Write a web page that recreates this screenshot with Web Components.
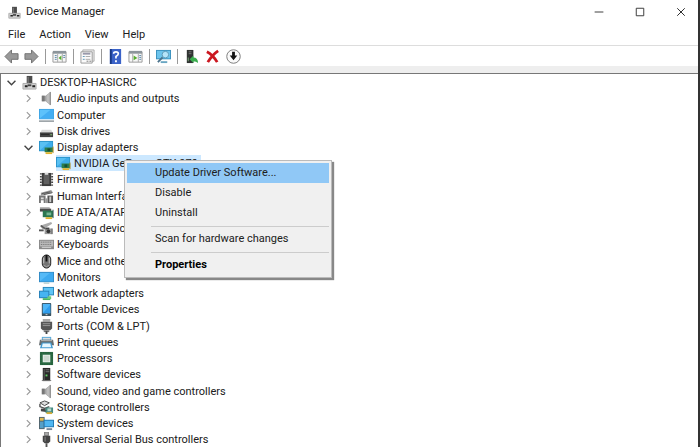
<!DOCTYPE html>
<html lang="en">
<head>
<meta charset="utf-8">
<title>Device Manager</title>
<style>
  html, body {
    margin: 0;
    height: 100%;
    overflow: hidden;
  }

  body {
    font-family: Roboto, "Open Sans", sans-serif;
    font-size: 11px;
    line-height: 16px;
    color: #202020;
    background: #fff;
  }
</style>
</head>
<body>
<dm-window heading="Device Manager">
  <dm-menubar slot="menu" items="File,Action,View,Help"></dm-menubar>
  <dm-toolbar slot="tools"></dm-toolbar>
  <dm-node icon="root" root open>DESKTOP-HASICRC
    <dm-node slot="nodes" icon="speaker">Audio inputs and outputs</dm-node>
    <dm-node slot="nodes" icon="computer">Computer</dm-node>
    <dm-node slot="nodes" icon="disk">Disk drives</dm-node>
    <dm-node slot="nodes" icon="display" open>Display adapters
      <dm-node slot="nodes" icon="display" leaf selected>NVIDIA GeForce GTX 970</dm-node>
    </dm-node>
    <dm-node slot="nodes" icon="firmware">Firmware</dm-node>
    <dm-node slot="nodes" icon="hid">Human Interface Devices</dm-node>
    <dm-node slot="nodes" icon="ide">IDE ATA/ATAPI controllers</dm-node>
    <dm-node slot="nodes" icon="imaging">Imaging devices</dm-node>
    <dm-node slot="nodes" icon="keyboard">Keyboards</dm-node>
    <dm-node slot="nodes" icon="mouse">Mice and other pointing devices</dm-node>
    <dm-node slot="nodes" icon="monitor">Monitors</dm-node>
    <dm-node slot="nodes" icon="network">Network adapters</dm-node>
    <dm-node slot="nodes" icon="portable">Portable Devices</dm-node>
    <dm-node slot="nodes" icon="port">Ports (COM &amp; LPT)</dm-node>
    <dm-node slot="nodes" icon="printer">Print queues</dm-node>
    <dm-node slot="nodes" icon="cpu">Processors</dm-node>
    <dm-node slot="nodes" icon="software">Software devices</dm-node>
    <dm-node slot="nodes" icon="speaker">Sound, video and game controllers</dm-node>
    <dm-node slot="nodes" icon="storage">Storage controllers</dm-node>
    <dm-node slot="nodes" icon="system">System devices</dm-node>
    <dm-node slot="nodes" icon="usb">Universal Serial Bus controllers</dm-node>
  </dm-node>
  <dm-context-menu slot="popup">
    <dm-item active>Update Driver Software...</dm-item>
    <dm-item>Disable</dm-item>
    <dm-item>Uninstall</dm-item>
    <dm-separator></dm-separator>
    <dm-item>Scan for hardware changes</dm-item>
    <dm-separator></dm-separator>
    <dm-item main>Properties</dm-item>
  </dm-context-menu>
</dm-window>

<script>
// All icons are drawn on a 16x16 grid
const ICONS = {
  root: `<path d="M5 1h6v9H5z" fill="#4b4b4b"/><path d="M6 2h1v7H6z" fill="#888"/><path d="M1 9h14v6H1z" fill="#d2d2d2" stroke="#aaa"/><path d="M3 11h3v2H3zM11 11h3v2h-3z" fill="#222"/><path d="M6 10h4v2H6z" fill="#444"/>`,
  speaker: `<path d="M3 5h4l5-4v14l-5-4H3z" fill="#a2a2a2"/><path d="M3 5h3v6H3z" fill="#777"/><path d="M8 5l4-4v14l-4-4z" fill="#bdbdbd"/><path d="M12 1v14" stroke="#777"/>`,
  computer: `<path d="M0 1h16v11H0z" fill="#3fa4e4"/><path d="M1 2h14v9H1z" fill="#5dc2fb"/><path d="M1 11L12 2h3v9z" fill="#43aef3"/><path d="M0 14h16" stroke="#8c9499" stroke-width="1.5"/>`,
  disk: `<path d="M3 6h10l2 4H1z" fill="#d9d9d9"/><path d="M1 9h14v5H1z" fill="#444"/><path d="M2 11h9" stroke="#222"/><path d="M12 11h2v1h-2z" fill="#83c774"/>`,
  display: `<path d="M0 1h15v11H0z" fill="#2a93ca"/><path d="M1 2h13v9H1z" fill="#59c0f2"/><path d="M1 11L11 2h3v9z" fill="#3fadea"/><path d="M6 8h9v5H6z" fill="#2d7d4b"/><path d="M9 9h3v3H9z" fill="#174f35"/><path d="M7 13h7v2H7z" fill="#e0b32f"/><path d="M15 7v7" stroke="#bb9226"/>`,
  firmware: `<path d="M3 1h10v14H3z" fill="#3c3c3c"/><path d="M5 3h6v10H5z" fill="#606060"/><path d="M1 2h2M1 5h2M1 8h2M1 11h2M1 14h2M13 2h2M13 5h2M13 8h2M13 11h2M13 14h2" stroke="#444" stroke-width="1.5"/><path d="M6 1h4v2H6z" fill="#ddd"/>`,
  hid: `<path d="M2 4l11-3 2 3-13 3z" fill="#999"/><path d="M3 5l9-2M5 6l9-2" stroke="#555"/><path d="M0 7h7v8H5v-3H2v3H0z" fill="#777"/><path d="M2 9h3v2H2z" fill="#ddd"/><path d="M9 7h6v8H9z" fill="#555"/><path d="M11 8h2v6h-2z" fill="#ccc"/><path d="M7 10h2v5H7z" fill="#999"/>`,
  ide: `<path d="M1 2h10l2 3H1z" fill="#b9b9b9"/><path d="M1 4h12v3H1z" fill="#4b4b4b"/><path d="M4 6h11v7H4z" fill="#2b7750"/><path d="M8 8h5v3H8z" fill="#76b693"/><path d="M7 13h7v2H7z" fill="#dbb130"/><path d="M15 5v9" stroke="#355"/>`,
  imaging: `<path d="M1 5l12-4 1 2-10 6z" fill="#aaa"/><path d="M2 5l7 5" stroke="#555" stroke-width="1.5"/><path d="M0 9h5v2H0z" fill="#555"/><path d="M6 8h8v6H6z" fill="#999"/><path d="M7 7h4v2H7z" fill="#444"/><circle cx="10" cy="11" r="2" fill="#333"/><path d="M14 8v6" stroke="#555"/>`,
  keyboard: `<path d="M0 3h16v10H0z" fill="#8a8a8a"/><path d="M1 4h14v6H1z" fill="#b9b9b9"/><path d="M2 5.500h12M2 8h12" stroke="#6a6a6a" stroke-dasharray="1 1"/><path d="M3 11h10" stroke="#ddd"/>`,
  mouse: `<rect x="3.500" y="1" width="9" height="14" rx="4.500" fill="#737373" stroke="#222"/><path d="M5 4v6M11 4v6" stroke="#c9c9c9"/><path d="M8 1v7" stroke="#111" stroke-width="2"/><path d="M5 12q3 3 6 0" fill="none" stroke="#aaa"/>`,
  monitor: `<path d="M0 2h16v11H0z" fill="#318ac4"/><path d="M1 3h14v9H1z" fill="#55baf7"/><path d="M1 12L12 3h3v9z" fill="#3daaf0"/><path d="M5 14h6" stroke="#9bb" />`,
  network: `<path d="M4 1h12v9H4z" fill="#2a86bb"/><path d="M5 2h10v7H5z" fill="#5fc5f6"/><path d="M0 5h11v8H0z" fill="#2881b8"/><path d="M1 6h9v6H1z" fill="#46b4f2"/><path d="M4 13h8v2H4z" fill="#47b663"/><path d="M9 11h4v3H9z" fill="#6bcc78"/>`,
  portable: `<rect x="3" y="1" width="10" height="14" rx="1" fill="#3b5361"/><path d="M4 2h8v10H4z" fill="#4db6f7"/><path d="M4 12l8-9v9z" fill="#2e9cec"/><path d="M7 13h2v1H7z" fill="#ddd"/>`,
  port: `<path d="M4 0h8v3H4z" fill="#aaa"/><path d="M2 3h12v7l-2 2H4l-2-2z" fill="#555"/><path d="M4 5h8M4 7h8" stroke="#999"/><path d="M5 12h6v2H5z" fill="#777"/><path d="M7 13h2v3H7z" fill="#444"/>`,
  printer: `<path d="M3 2h10v4H3z" fill="#53a7d9"/><path d="M4 3h8v2H4z" fill="#ddd"/><path d="M1 5h14l1 6H0z" fill="#656d70"/><path d="M2 6h12" stroke="#bbb"/><path d="M3 8h10l2 6H1z" fill="#429bd1"/><path d="M4 9h8l1 4H3z" fill="#e7f7ff"/>`,
  cpu: `<path d="M1 1h14v14H1z" fill="#2f6f48"/><path d="M2 2h12v12H2z" fill="none" stroke="#164e2d" stroke-dasharray="1 1"/><path d="M4 4h8v8H4z" fill="#e5eee8"/><path d="M5 5h6v6H5z" fill="#ccd9d0"/>`,
  software: `<path d="M4 1h8v14H4z" fill="#292929"/><path d="M5 2h1v12H5z" fill="#666"/><path d="M7 3h4M7 5h4" stroke="#777"/><path d="M7 8h2v2H7z" fill="#61d266"/><path d="M3 14h10v1H3z" fill="#777"/>`,
  storage: `<path d="M1 3l5-2 5 2-5 3z" fill="#ddd" stroke="#444"/><path d="M1 4v3l5 2 5-2" fill="none" stroke="#555" stroke-width="1.500"/><path d="M2 9l7 1v3l-7-1z" fill="#444"/><path d="M7 8h8v6H7z" fill="#458b80"/><path d="M9 9h4v3H9z" fill="#b6d7cb"/><path d="M8 13h6v2H8z" fill="#d5ad37"/>`,
  system: `<path d="M0 1h6v13H0z" fill="#52646d"/><path d="M1 2h4v3H1z" fill="#e1bc52"/><path d="M1 6h4v7H1z" fill="#559fc7"/><path d="M5 4h11v8H5z" fill="#2379b1"/><path d="M6 5h9v6H6z" fill="#50b7f2"/><path d="M8 14h6" stroke="#789" stroke-width="2"/>`,
  usb: `<path d="M6 0h4v4H6z" fill="#aaa" stroke="#777"/><path d="M4 4h8v6l-2 2H6l-2-2z" fill="#444"/><path d="M6 5h1v5H6z" fill="#888"/><path d="M7 12h2v4H7z" fill="#555"/>`,
  back: `<path d="M1 8l7-7v4h7v6H8v4z" fill="#999" stroke="#707070"/>`,
  forward: `<path d="M15 8L8 1v4H1v6h7v4z" fill="#999" stroke="#707070"/>`,
  tree: `<path d="M1 3h14v11H1z" fill="#f7f7f7" stroke="#999"/><path d="M1 2h14v3H1z" fill="#8c959b"/><path d="M6 5v9M11 5v9" stroke="#aaa"/><path d="M3 7h2M3 9h2M3 11h2M12 7h2M12 9h2" stroke="#58a"/><path d="M10 7v5L7 9.500z" fill="#55ad2d"/>`,
  action: `<path d="M1 3h14v11H1z" fill="#f7f7f7" stroke="#999"/><path d="M1 2h14v3H1z" fill="#8c959b"/><path d="M5 5v9M11 5v9" stroke="#aaa"/><path d="M12 7h2M12 9h2M12 11h2" stroke="#58a"/><path d="M6 7v5l4-2.500z" fill="#55ad2d"/>`,
  props: `<path d="M3 1h12v12H3z" fill="#eee" stroke="#aaa"/><path d="M1 3h12v12H1z" fill="#fafafa" stroke="#999"/><path d="M3 5h8" stroke="#99a" stroke-width="2"/><path d="M3 8h2M3 11h2" stroke="#5a94b5"/><path d="M6 8h5M6 11h5" stroke="#aaa"/><path d="M7 13h2M10 13h2" stroke="#777"/>`,
  help: `<path d="M2 0h12v16H2z" fill="#3a62c8"/><path d="M2 0h2v16H2z" fill="#183986"/><path d="M6 5q0-2 2.500-2T11 5q0 1.500-2.500 3v2" fill="none" stroke="#fff" stroke-width="1.800"/><path d="M7.500 12h2v2h-2z" fill="#fff"/>`,
  scan: `<path d="M0 1h16v10H0z" fill="#3c91be"/><path d="M1 2h14v8H1z" fill="#6cc4ed"/><path d="M5 13h7v2H5z" fill="#69a6c2"/><circle cx="10" cy="6" r="3.500" fill="#b5e4f9" stroke="#5896b5"/><path d="M7 9l-5 5" stroke="#49718b" stroke-width="2"/>`,
  update: `<path d="M3 1h7v14H3z" fill="#303332"/><path d="M5 3h3M5 5h3" stroke="#777"/><path d="M4 9h1v4H4z" fill="#7a7"/><path d="M6 11l4-4v2q5 0 5 6-2-2-5-2v2z" fill="#39ae4d"/>`,
  remove: `<path d="M2 3q6 3 11 11M14 2Q8 6 3 14" fill="none" stroke="#cb1720" stroke-width="3"/>`,
  disable: `<circle cx="8" cy="8" r="7.200" fill="#fafafa" stroke="#777"/><path d="M6.500 3h3v4H12l-4 5-4-5h2.500z" fill="#111"/>`,
  expand: `<path d="M5 2l6 6-6 6" fill="none" stroke="#999" stroke-width="2"/>`,
  collapse: `<path d="M1 5l7 7 7-7" fill="none" stroke="#444" stroke-width="2.500"/>`,
  minimize: `<path d="M1 8h14" stroke="#333" stroke-width="1.500"/>`,
  maximize: `<path d="M2 2h12v12H2z" fill="none" stroke="#333" stroke-width="1.500"/>`,
  close: `<path d="M2 2l12 12M14 2L2 14" stroke="#222" stroke-width="1.500"/>`
};

class DmIcon extends HTMLElement {
  connectedCallback() {
    if (this.shadowRoot) return;
    this.attachShadow({ mode: 'open' }).innerHTML = `
      <style>
        :host { display: block; flex: none; width: 15px; height: 15px; }
        svg { display: block; width: 100%; height: 100%; }
      </style>
      <svg viewBox="0 0 16 16" aria-hidden="true">${ICONS[this.getAttribute('name')] || ''}</svg>`;
  }
}

class DmWindow extends HTMLElement {
  connectedCallback() {
    this.attachShadow({ mode: 'open' }).innerHTML = `
      <style>
        :host {
          display: flex;
          flex-direction: column;
          position: relative;
          box-sizing: border-box;
          min-height: 100vh;
          border-right: 2px solid #333;
        }
        header { display: flex; align-items: center; height: 24px; padding-left: 8px; }
        h1 { flex: 1; margin: 0 0 0 5px; font-size: 11px; font-weight: 400; }
        header > dm-icon { width: 13px; height: 13px; }
        button {
          display: grid;
          place-items: center;
          width: 34px;
          height: 24px;
          margin-left: 7px;
          padding: 0;
          border: 0;
          background: none;
        }
        button dm-icon { width: 10px; height: 10px; }
        main { flex: 1; border-left: 1px solid #777; border-top: 1px solid #777; }
      </style>
      <header>
        <dm-icon name="root"></dm-icon>
        <h1>${this.getAttribute('heading')}</h1>
        <button aria-label="Minimize"><dm-icon name="minimize"></dm-icon></button>
        <button aria-label="Maximize"><dm-icon name="maximize"></dm-icon></button>
        <button aria-label="Close"><dm-icon name="close"></dm-icon></button>
      </header>
      <slot name="menu"></slot>
      <slot name="tools"></slot>
      <main role="tree"><slot></slot></main>
      <slot name="popup"></slot>`;
  }
}

class DmMenubar extends HTMLElement {
  connectedCallback() {
    const items = this.getAttribute('items').split(',');
    this.attachShadow({ mode: 'open' }).innerHTML = `
      <style>
        :host { display: flex; gap: 14px; height: 21px; padding-left: 8px; border-bottom: 1px solid #ddd; }
        button { padding: 1px 0 0; border: 0; background: none; font: inherit; color: inherit; }
      </style>
      ${items.map(item => `<button>${item}</button>`).join('')}`;
  }
}

class DmToolbar extends HTMLElement {
  connectedCallback() {
    const groups = [
      [['back', 'Back'], ['forward', 'Forward']],
      [['tree', 'Show/Hide Console Tree']],
      [['props', 'Properties']],
      [['help', 'Help'], ['action', 'Show/Hide Action Pane']],
      [['scan', 'Scan for hardware changes']],
      [['update', 'Update driver'], ['remove', 'Uninstall'], ['disable', 'Disable']]
    ];
    this.attachShadow({ mode: 'open' }).innerHTML = `
      <style>
        :host {
          display: flex;
          align-items: center;
          height: 20px;
          padding-left: 4px;
          border-bottom: 7px solid #eee;
        }
        div { display: flex; align-items: center; gap: 5px; height: 15px; }
        div + div { margin-left: 6px; padding-left: 6px; border-left: 1px solid #999; }
        div:last-child { gap: 6px; }
        button { padding: 0; border: 0; background: none; }
      </style>
      ${groups.map(group => `<div>${group.map(([icon, label]) =>
        `<button aria-label="${label}"><dm-icon name="${icon}"></dm-icon></button>`).join('')}</div>`).join('')}`;
  }
}

class DmNode extends HTMLElement {
  connectedCallback() {
    if (this.shadowRoot) return;
    const open = this.hasAttribute('open');
    const leaf = this.hasAttribute('leaf');
    this.setAttribute('role', 'treeitem');
    this.attachShadow({ mode: 'open' }).innerHTML = `
      <style>
        :host { display: block; }
        :host([root]) { padding-left: 6px; }
        .row { display: flex; align-items: center; height: 16px; white-space: nowrap; }
        button { width: 9px; height: 9px; margin-right: 6px; padding: 0; border: 0; background: none; }
        button dm-icon { width: 9px; height: 9px; }
        .label { padding: 2px 3px 0; }
        .children { padding-left: 17px; }
        /* spare pixel after every fourth child */
        ::slotted(dm-node:nth-child(4n + 1):not([leaf])) { margin-bottom: 1px; }
        :host([leaf]) .row { width: max-content; margin-left: 15px; }
        :host([selected]) .row { background: #cce8ff; }
      </style>
      <div class="row">
        ${leaf ? '' : `<button aria-label="${open ? 'Collapse' : 'Expand'}"><dm-icon name="${open ? 'collapse' : 'expand'}"></dm-icon></button>`}
        <dm-icon name="${this.getAttribute('icon')}"></dm-icon>
        <span class="label"><slot></slot></span>
      </div>
      <div class="children" role="group"><slot name="nodes"></slot></div>`;
  }
}

class DmContextMenu extends HTMLElement {
  connectedCallback() {
    this.setAttribute('role', 'menu');
    this.attachShadow({ mode: 'open' }).innerHTML = `
      <style>
        :host {
          display: block;
          position: absolute;
          left: 124px;
          top: 160px;
          box-sizing: border-box;
          width: 208px;
          padding: 2px;
          border: 1px solid #bbb;
          background: #f0f0f0;
          box-shadow: 2px 2px 1px #888;
        }
      </style>
      <slot></slot>`;
  }
}

class DmItem extends HTMLElement {
  connectedCallback() {
    this.attachShadow({ mode: 'open' }).innerHTML = `
      <style>
        :host { display: block; }
        button {
          display: block;
          width: 100%;
          height: 20px;
          padding: 0 0 0 28px;
          border: 0;
          background: none;
          font: inherit;
          color: inherit;
          text-align: left;
        }
        :host([active]) button { background: #90c8f6; }
        :host([main]) button { font-weight: 700; color: #000; }
      </style>
      <button role="menuitem"><slot></slot></button>`;
  }
}

class DmSeparator extends HTMLElement {
  connectedCallback() {
    this.attachShadow({ mode: 'open' }).innerHTML = `
      <style>
        :host { display: block; padding: 3px 0 2px 24px; }
        hr { margin: 0; border: 0; border-top: 1px solid #ccc; }
      </style>
      <hr>`;
  }
}

customElements.define('dm-icon', DmIcon);
customElements.define('dm-window', DmWindow);
customElements.define('dm-menubar', DmMenubar);
customElements.define('dm-toolbar', DmToolbar);
customElements.define('dm-node', DmNode);
customElements.define('dm-context-menu', DmContextMenu);
customElements.define('dm-item', DmItem);
customElements.define('dm-separator', DmSeparator);
</script>
</body>
</html>
